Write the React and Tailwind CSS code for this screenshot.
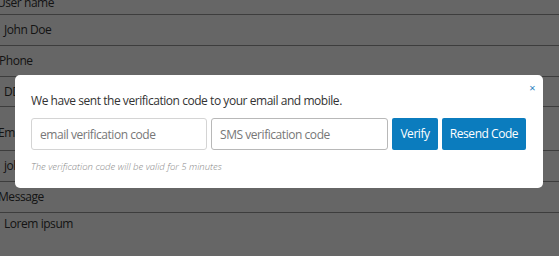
export default function App() {
  return (
    <div className="relative h-[256px] w-[559px] overflow-hidden bg-white font-['Open_Sans',sans-serif] text-[12px] tracking-[-0.45px] text-[#333]">
      {/* form behind the dialog */}
      <div className="flex flex-col">
        <label className="-ml-[3px] -mt-[7px] h-[21px] leading-[19px]">User name</label>
        <div className="flex h-[32px] items-center border-y border-[#999] pl-[4px]">John Doe</div>
        <label className="-ml-[1px] flex h-[30px] items-center">Phone</label>
        <div className="flex h-[31px] items-center border-y border-[#999] pl-[4px]">DDD</div>
        <label className="-ml-[2px] h-[43px] pt-[17px] leading-[18px]">Email</label>
        <div className="flex h-[32px] items-center border-y border-[#999] pl-[4px]">john@example.com</div>
        <label className="-ml-[2px] flex h-[30px] items-center">Message</label>
        <div className="h-[60px] border-t border-[#999] pl-[4px] pt-[2px]">Lorem ipsum</div>
      </div>

      {/* dialog */}
      <div className="absolute inset-0 bg-black/60">
        <div className="relative ml-[15px] mt-[75px] w-[528px] rounded-[5px] bg-white px-[16px] pb-[15px] pt-[17px]">
          <button className="absolute right-[8px] top-[5px] text-[11px] text-[#2a7fc0]">×</button>
          <p className="leading-[18px] text-[#333]">We have sent the verification code to your email and mobile.</p>
          <div className="mt-[8px] flex gap-[4px]">
            <input
              className="h-[32px] w-[176px] rounded-[3px] border border-[#d4d4d4] px-[8px] text-[12px] placeholder:text-[#777] outline-none"
              placeholder="email verification code"
            />
            <input
              className="h-[32px] w-[177px] rounded-[3px] border border-[#b8b8b8] px-[8px] text-[12px] placeholder:text-[#777] outline-none"
              placeholder="SMS verification code"
            />
            <button className="h-[32px] w-[46px] rounded-[2px] bg-[#0b7cbe] text-white">Verify</button>
            <button className="h-[32px] w-[84px] rounded-[2px] bg-[#0b7cbe] text-white">Resend Code</button>
          </div>
          <p className="mt-[10px] text-[9.5px] font-light italic leading-[13px] tracking-normal text-[#888]">
            The verification code will be valid for 5 minutes
          </p>
        </div>
      </div>
    </div>
  );
}
